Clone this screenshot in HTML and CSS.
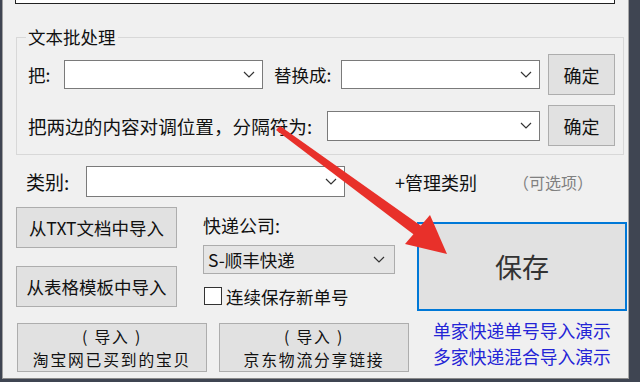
FILE: index.html
```html
<!DOCTYPE html>
<html lang="zh-CN">
<head>
    <meta charset="UTF-8">
    <title>快递单号导入</title>
    <link rel="stylesheet" href="styles.css">
</head>
<body>
<div class="desk">
    <div class="window">
        <div class="top-input"></div>

        <!-- 文本批处理 -->
        <fieldset class="batch">
            <legend>文本批处理</legend>
            <div class="batch-row">
                <span class="lbl lbl-ba">把:</span>
                <div class="combo combo-a">
                    <svg class="chev" width="12" height="7" viewBox="0 0 12 7"><polyline points="1,1 6,6 11,1"/></svg>
                </div>
                <span class="lbl lbl-to">替换成:</span>
                <div class="combo combo-b">
                    <svg class="chev" width="12" height="7" viewBox="0 0 12 7"><polyline points="1,1 6,6 11,1"/></svg>
                </div>
                <button class="btn btn-ok">确定</button>
            </div>
            <div class="batch-row">
                <span class="lbl lbl-swap">把两边的内容对调位置，分隔符为:</span>
                <div class="combo combo-c">
                    <svg class="chev" width="12" height="7" viewBox="0 0 12 7"><polyline points="1,1 6,6 11,1"/></svg>
                </div>
                <button class="btn btn-ok">确定</button>
            </div>
        </fieldset>

        <!-- 类别 -->
        <div class="cat-row">
            <span class="lbl lbl-cat">类别:</span>
            <div class="combo combo-cat">
                <svg class="chev" width="12" height="7" viewBox="0 0 12 7"><polyline points="1,1 6,6 11,1"/></svg>
            </div>
            <span class="manage">+管理类别</span>
            <span class="optional">（可选项）</span>
        </div>

        <div class="lower">
            <div class="lower-left">
                <div class="lower-top">
                    <div class="import-col">
                        <button class="btn btn-import">从TXT文档中导入</button>
                        <button class="btn btn-import">从表格模板中导入</button>
                    </div>
                    <div class="express-col">
                        <div class="express-lbl">快递公司:</div>
                        <div class="select">
                            <span>S-顺丰快递</span>
                            <svg class="chev" width="12" height="7" viewBox="0 0 12 7"><polyline points="1,1 6,6 11,1"/></svg>
                        </div>
                        <label class="check-row">
                            <span class="check-box"></span>
                            <span>连续保存新单号</span>
                        </label>
                    </div>
                </div>
                <div class="lower-bottom">
                    <button class="btn btn-wide">
                        <span class="btn-line">( 导入 )</span>
                        <span class="btn-line">淘宝网已买到的宝贝</span>
                    </button>
                    <button class="btn btn-wide">
                        <span class="btn-line">( 导入 )</span>
                        <span class="btn-line">京东物流分享链接</span>
                    </button>
                </div>
            </div>
            <div class="lower-right">
                <button class="btn btn-save">保存</button>
                <div class="demo-links">
                    <a class="demo-link">单家快递单号导入演示</a>
                    <a class="demo-link">多家快递混合导入演示</a>
                </div>
            </div>
        </div>
    </div>

    <!-- red arrow drawn over the dialog -->
    <svg class="arrow" width="640" height="382" viewBox="0 0 640 382">
        <polygon points="280,126 276,130 417,237 424,228" fill="#e8302a"/>
        <polygon points="447,254 405,244 430,215" fill="#e8302a"/>
    </svg>
</div>
</body>
</html>
```

FILE: styles.css
```css
* {
    box-sizing: border-box;
}

body {
    margin: 0;
    background: #3f4552;
    font-family: "Noto Sans CJK SC", "Noto Sans", sans-serif;
    font-size: 17.5px;
    color: #111;
}

.desk {
    position: relative;
    width: 640px;
    height: 382px;
    overflow: hidden;
}

.window {
    margin-left: 2px;
    width: 627px;
    height: 379px;
    background: #f0f0f0;
    border-left: 1px solid #a0a0a0;
    border-right: 1px solid #a8a8a8;
    border-bottom: 1px solid #8a8a8a;
}

.top-input {
    margin-left: 12px;
    width: 600px;
    height: 4px;
    background: #fff;
    border: 1px solid #222;
    border-top: none;
}

/* group box */
.batch {
    margin: 22px 0 0 13px;
    width: 607px;
    padding: 6px 8px 8px 11px;
    border: 1px solid #d8d8d8;
}

.batch legend {
    padding: 0 2px;
    margin-left: -2px;
    line-height: 22px;
    font-size: 17.5px;
}

.batch-row {
    display: flex;
    align-items: center;
    height: 41px;
}

.batch-row + .batch-row {
    margin-top: 10px;
}

.lbl {
    white-space: nowrap;
    line-height: 24px;
}

.lbl-ba {
    width: 36px;
}

.lbl-to {
    width: 67px;
    margin-left: 11px;
}

.lbl-swap {
    width: 299px;
    font-size: 18.6px;
}

.combo {
    display: flex;
    align-items: center;
    justify-content: flex-end;
    height: 29px;
    padding-right: 7px;
    background: #fff;
    border: 1px solid #7a7a7a;
}

.combo-a,
.combo-b {
    width: 199px;
}

.combo-c {
    width: 213px;
    height: 30px;
}

.chev polyline {
    fill: none;
    stroke: #333;
    stroke-width: 1.2;
}

.btn {
    font-family: inherit;
    font-size: 17.5px;
    color: #111;
    background: #e1e1e1;
    border: 1px solid #adadad;
    padding: 0;
}

.btn-ok {
    width: 67px;
    height: 41px;
    margin-left: 8px;
    font-size: 18px;
}

/* category */
.cat-row {
    display: flex;
    align-items: center;
    margin: 11px 0 0 23px;
    height: 31px;
}

.lbl-cat {
    width: 60px;
    font-size: 19px;
}

.combo-cat {
    width: 259px;
    height: 31px;
}

.manage {
    margin-left: 50px;
    font-size: 18px;
}

.optional {
    margin-left: 36px;
    font-size: 16px;
    color: #808080;
}

/* lower area */
.lower {
    display: flex;
    margin: 10px 0 0 13px;
}

.lower-left {
    width: 393px;
}

.lower-top {
    display: flex;
}

.import-col {
    display: flex;
    flex-direction: column;
    gap: 18px;
    width: 161px;
}

.btn-import {
    height: 41px;
}

.express-col {
    width: 192px;
    margin-left: 26px;
}

.express-lbl {
    margin-top: 8px;
    line-height: 20px;
    font-size: 18px;
}

.select {
    display: flex;
    align-items: center;
    justify-content: space-between;
    margin-top: 10px;
    height: 29px;
    padding: 0 9px 0 4px;
    background: #e5e5e5;
    border: 1px solid #acacac;
}

.check-row {
    display: flex;
    align-items: center;
    margin-top: 12px;
    height: 20px;
}

.check-box {
    width: 18px;
    height: 18px;
    margin: 0 4px 0 1px;
    background: #fff;
    border: 1px solid #333;
}

.lower-bottom {
    display: flex;
    gap: 12px;
    margin: 16px 0 0 1px;
}

.btn-wide {
    display: flex;
    flex-direction: column;
    justify-content: center;
    align-items: center;
    width: 191px;
    height: 49px;
}

.btn-line {
    display: block;
    line-height: 23px;
    font-size: 15.8px;
    letter-spacing: 1.8px;
}

.lower-right {
    width: 210px;
    margin-left: 8px;
}

.btn-save {
    width: 210px;
    height: 89px;
    margin-top: 15px;
    font-size: 27px;
    color: #333;
    border: 2px solid #0078d7;
}

.demo-links {
    margin-top: 6px;
    text-align: center;
}

.demo-link {
    display: block;
    line-height: 26px;
    font-size: 17.8px;
    color: #2424d6;
}

.arrow {
    position: absolute;
    left: 0;
    top: 0;
    pointer-events: none;
}
```
